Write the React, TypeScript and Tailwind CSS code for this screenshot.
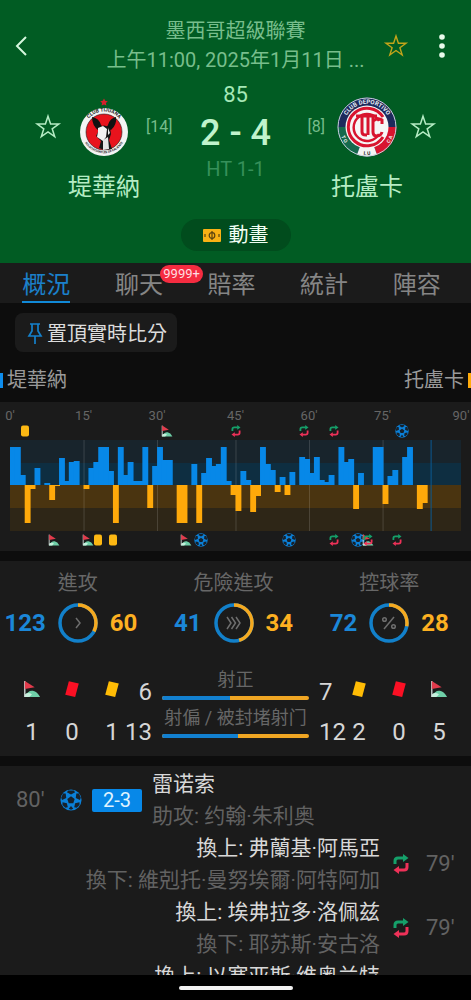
import type { ReactNode } from 'react';

// The timeline has 92 slots: 0-45 and stoppage, then 46-90 and stoppage
const SLOTS = 92;
const SLOT_W = 5;

// Pressure per slot: positive is the home side, negative is the away side
const momentum = [
  38, 38, 10, -38, -4, 17, 0, 2, -15, -1, 27, 4, 23, 24, 0, -4, 17, 23, 38, 38, 14, -38, 38, 10, 23, 4,
  4, 38, -23, 19, 38, 25, 25, 0, -38, -38, 0, 21, -38, 12, 27, 19, 21, 38, 4, -10, -26, 14, 5, -27,
  -11, 38, 21, 15, -7, 8, -10, 13, 0, 28, 26, 12, 28, 5, 3, 10, 0, 38, 23, 26, -24, 12, 0, 0, 38, 38,
  -19, 9, 15, 0, 28, 38, 0, -24, -18,
];

const ticks = [
  { slot: 0, label: "0'" },
  { slot: 15, label: "15'" },
  { slot: 30, label: "30'" },
  { slot: 46, label: "45'" },
  { slot: 61, label: "60'" },
  { slot: 76, label: "75'" },
  { slot: 92, label: "90'" },
];

type MarkerKind = 'card' | 'corner' | 'sub' | 'goal';

const homeMarkers: { slot: number; kind: MarkerKind }[] = [
  { slot: 3, kind: 'card' },
  { slot: 32, kind: 'corner' },
  { slot: 46, kind: 'sub' },
  { slot: 60, kind: 'sub' },
  { slot: 66, kind: 'sub' },
  { slot: 80, kind: 'goal' },
];

const awayMarkers: { slot: number; kind: MarkerKind }[] = [
  { slot: 9, kind: 'corner' },
  { slot: 16, kind: 'corner' },
  { slot: 18, kind: 'card' },
  { slot: 21, kind: 'card' },
  { slot: 36, kind: 'corner' },
  { slot: 39, kind: 'goal' },
  { slot: 57, kind: 'goal' },
  { slot: 66, kind: 'sub' },
  { slot: 71, kind: 'goal' },
  { slot: 73, kind: 'corner' },
  { slot: 73, kind: 'sub' },
  { slot: 79, kind: 'sub' },
];

const tabs = [
  { label: '概況', active: true },
  { label: '聊天', badge: '9999+' },
  { label: '賠率' },
  { label: '統計' },
  { label: '陣容' },
];

const substitutions = [
  { on: '弗蘭基·阿馬亞', off: '維剋托·曼努埃爾·阿特阿加', minute: "79'" },
  { on: '埃弗拉多·洛佩兹', off: '耶苏斯·安古洛', minute: "79'" },
  { on: '以塞亚斯·维奥兰特' },
];

function StarIcon({ className }: { className: string }) {
  return (
    <svg viewBox="0 0 28 28" fill="none" stroke="currentColor" strokeWidth="1.5" className={className}>
      <path d="M14 3.2l2.6 7.8h8.2l-6.6 4.8 2.5 7.9L14 18.9l-6.7 4.8 2.5-7.9L3.2 11h8.2z" />
    </svg>
  );
}

function BallIcon({ className }: { className: string }) {
  return (
    <svg viewBox="0 0 24 24" className={className}>
      <circle cx="12" cy="12" r="11.5" fill="#0b80d8" />
      <g fill="#17212b">
        <path d="M12 8l4 3-1.500 4.500h-5L8 11z" />
        <path d="M7.500 3.500L12 6l4.500-2.500L15 1.500H9z" />
        <path d="M17.800 5l-.6 4.700 4.500 2.300 1-2.500-2-4.500z" />
        <path d="M21.300 14.500l-4.800 1-1 4.500 2.800.5 3-3z" />
        <path d="M2.700 14.500l4.800 1 1 4.500-2.800.5-3-3z" />
        <path d="M6.200 5l.6 4.700L2.300 12l-1-2.500 2-4.500z" />
        <path d="M9.500 21.500L12 18.500l2.500 3L12 22.500z" />
      </g>
    </svg>
  );
}

function SubIcon({ className }: { className: string }) {
  return (
    <svg viewBox="0 0 16 20" fill="none" strokeWidth="3" className={className}>
      <path d="M2 10V7q0-3 3-3h6" stroke="#15a06a" />
      <path d="M10 0l5.500 4L10 8z" fill="#15a06a" />
      <path d="M14 9v4q0 3-3 3H5" stroke="#ee3158" />
      <path d="M6 12L.5 16 6 20z" fill="#ee3158" />
    </svg>
  );
}

function CornerIcon({ className }: { className: string }) {
  return (
    <svg viewBox="0 0 20 20" className={className}>
      <path d="M2 19v-1q4-7 9-6t8 7z" fill="#6fcfa8" />
      <path d="M2 19v-3q4-3 8 0l-3 3z" fill="#c5f0dc" />
      <path d="M2 1v18" stroke="#d9e2e0" strokeWidth="1.4" />
      <path d="M2 1l11 7-11 2z" fill="#e23b4c" />
    </svg>
  );
}

function CardIcon({ color, className }: { color: string; className: string }) {
  return (
    <svg viewBox="0 0 20 20" className={className}>
      <path d="M6.500 1.500l11 2.500-4 15-11-2.500z" fill={color} />
    </svg>
  );
}

function TijuanaLogo() {
  return (
    <svg viewBox="0 0 60 60" className="size-[60px]">
      <defs>
        <path id="tj-top" d="M10.5 36a19.600 19.600 0 1 1 39 0" />
        <path id="tj-bottom" d="M8 38a22.400 22.400 0 0 0 44 0" />
      </defs>
      <path d="M30 1.500l1.200 2.300 2.600.4-1.900 1.800.5 2.600-2.400-1.200-2.400 1.200.5-2.600-1.900-1.800 2.600-.4z" fill="#d5202c" />
      <circle cx="30" cy="35" r="24" fill="#f4f4f4" />
      <circle cx="30" cy="35" r="18" fill="#e8131d" stroke="#222" strokeWidth=".6" />
      <path d="M18 20q7 1 9 8l3 3-5 3q-7-5-7-14z" fill="#111" />
      <path d="M42 20q-6 1-8 8l-2 3 5 2q6-5 5-13z" fill="#111" />
      <path d="M24 31q6-5 12 0l1 6-2 6 3 9q-8 2-13-1l2-7-5-5 2-4z" fill="#161616" />
      <path d="M24 31l5-2 4 3-1 8-3 4-6-4 1-5z" fill="#f3f3f3" />
      <path d="M29 43l5-3 1 12-6 1z" fill="#e5e5e5" />
      <path d="M34 31l2 5-2 2z" fill="#eee" />
      <text fontSize="5" fontWeight="700" fill="#222" textAnchor="middle">
        <textPath href="#tj-top" startOffset="50%">CLUB TIJUANA</textPath>
      </text>
      <text fontSize="3" fontWeight="700" fill="#222" textAnchor="middle">
        <textPath href="#tj-bottom" startOffset="50%">XOLOITZCUINTLES DE CALIENTE</textPath>
      </text>
    </svg>
  );
}

function TolucaLogo() {
  return (
    <svg viewBox="0 0 60 60" className="size-[60px] overflow-visible">
      <defs>
        <path id="tl-top" d="M7 33a23.200 23.200 0 1 1 46 0" />
        <path id="tl-bottom" d="M3 31a27 27 0 0 0 54 0" />
      </defs>
      <circle cx="30" cy="30" r="29.5" fill="#1d2a5c" />
      <path d="M.5 30H30L20 57.700A29.500 29.500 0 0 1 .5 30z" fill="#15694d" />
      <path d="M59.500 30H30l10 27.700A29.500 29.500 0 0 0 59.500 30z" fill="#d8142f" />
      <path d="M20 57.700L30 30l10 27.700a29.500 29.500 0 0 1-20 0z" fill="#f4f4f4" />
      <circle cx="30" cy="30" r="29" fill="none" stroke="#c8d3da" strokeWidth="1" />
      <circle cx="30" cy="30" r="21.500" fill="#f6f6f6" />
      <path d="M46 20A18.800 18.800 0 1 0 46 40" fill="none" stroke="#d8142f" strokeWidth="3" />
      <path d="M42 24A13.500 13.500 0 1 0 42 37" fill="none" stroke="#d8142f" strokeWidth="2.500" />
      <path
        d="M19 19h21M25 20v15q0 3 4 3h1M31 20v18M36 20v15q0 4 4 4t5-4M36 24q5-4 9-1v4"
        fill="none"
        stroke="#d8142f"
        strokeWidth="3"
      />
      <text fontSize="6" fontWeight="700" fill="#e8ecf4" textAnchor="middle">
        <textPath href="#tl-top" startOffset="50%">CLUB DEPORTIVO</textPath>
      </text>
      <text fontSize="5" fontWeight="700" fill="#f1f1f1">
        <textPath href="#tl-bottom" startOffset="10%">T O</textPath>
      </text>
      <text fontSize="5" fontWeight="700" fill="#222" textAnchor="middle">
        <textPath href="#tl-bottom" startOffset="50%">L U</textPath>
      </text>
      <text fontSize="5" fontWeight="700" fill="#f1f1f1" textAnchor="end">
        <textPath href="#tl-bottom" startOffset="90%">C A</textPath>
      </text>
    </svg>
  );
}

function Team({ name, rank, logo, away }: { name: string; rank: string; logo: ReactNode; away?: boolean }) {
  return (
    <div className={`flex items-start gap-1.5 pt-[22px] ${away ? 'flex-row-reverse' : ''}`}>
      <button type="button" aria-label={`收藏 ${name}`} className="flex h-[60px] items-center text-[#b5ecc4]">
        <StarIcon className="size-7" />
      </button>
      <div className="flex flex-col items-center">
        {logo}
        <p className="mt-4 whitespace-nowrap text-2xl leading-7 text-[#b5ecc4]">{name}</p>
      </div>
      <span className="flex h-[60px] items-center text-base text-[#76bd8b]">{rank}</span>
    </div>
  );
}

function MarkerRow({ markers }: { markers: { slot: number; kind: MarkerKind }[] }) {
  return (
    <div className="relative h-[18px]">
      {markers.map((m) => (
        <span
          key={`${m.slot}-${m.kind}`}
          className="absolute top-1/2 -translate-x-1/2 -translate-y-1/2"
          style={{ left: `${(m.slot / SLOTS) * 100}%` }}
        >
          {m.kind === 'card' && <span className="block h-[11px] w-2 rounded-xs bg-[#fdb813]" />}
          {m.kind === 'corner' && <CornerIcon className="size-3" />}
          {m.kind === 'sub' && <SubIcon className="h-3 w-2.5" />}
          {m.kind === 'goal' && <BallIcon className="size-3.5" />}
        </span>
      ))}
    </div>
  );
}

function MomentumChart() {
  return (
    <svg viewBox="0 0 460 91" preserveAspectRatio="none" className="block h-[91px] w-full">
      <rect width="460" height="23" fill="#18242c" />
      <rect y="23" width="460" height="22" fill="#0e2e41" />
      <rect y="45" width="460" height="23" fill="#4a3410" />
      <rect y="68" width="460" height="23" fill="#2e2617" />
      {ticks.slice(1, -1).map((t) => (
        <rect key={t.slot} x={t.slot * SLOT_W} width="1" height="91" fill="#fff" opacity="0.15" />
      ))}
      <rect x={86 * SLOT_W - 1} width="1" height="91" fill="#0b5a94" />
      {momentum.map((v, i) => (
        <rect
          key={i}
          x={i * SLOT_W}
          y={v > 0 ? 45 - v : 45}
          width={SLOT_W + 1}
          height={Math.abs(v)}
          fill={v > 0 ? '#0788e8' : '#ffa90a'}
        />
      ))}
    </svg>
  );
}

function Donut({ title, home, away, children }: { title: string; home: number; away: number; children: ReactNode }) {
  const share = (away / (home + away)) * 100;
  return (
    <div className="min-w-0 flex-1">
      <p className="text-center text-xl leading-7 text-[#676767]">{title}</p>
      <div className="mt-1.5 grid grid-cols-[1fr_40px_1fr] items-center gap-3 text-2xl font-bold leading-10">
        <span className="justify-self-end text-[#1b87d8]">{home}</span>
        <svg viewBox="0 0 40 40" fill="none" className="size-10">
          <circle cx="20" cy="20" r="18" stroke="#1280ca" strokeWidth="3.5" />
          <circle
            cx="20"
            cy="20"
            r="18"
            stroke="#f5a91f"
            strokeWidth="3.5"
            pathLength="100"
            strokeDasharray={`${share} 100`}
            transform="rotate(-90 20 20)"
          />
          <g stroke="#6e6e6e" strokeWidth="1.5">
            {children}
          </g>
        </svg>
        <span className="text-[#fdb021]">{away}</span>
      </div>
    </div>
  );
}

function ShotBar({ label, home, away }: { label: string; home: number; away: number }) {
  return (
    <div>
      <p className="whitespace-nowrap text-center text-lg leading-6 text-[#676767]">{label}</p>
      <div className="mt-1 flex h-1 overflow-hidden rounded-full bg-[#f0a623]">
        <div className="bg-[#1280d0]" style={{ width: `${(home / (home + away)) * 100}%` }} />
      </div>
    </div>
  );
}

function Discipline({ corners, reds, yellows, away }: { corners: number; reds: number; yellows: number; away?: boolean }) {
  const items = [
    { icon: <CornerIcon className="size-[18px]" />, count: corners },
    { icon: <CardIcon color="#fb1024" className="size-[18px]" />, count: reds },
    { icon: <CardIcon color="#ffbc05" className="size-[18px]" />, count: yellows },
  ];
  return (
    <div className={`flex gap-5 pt-2 ${away ? 'flex-row-reverse' : ''}`}>
      {items.map((item, i) => (
        <div key={i} className="flex w-5 flex-col items-center">
          <span className="flex h-8 items-start pt-1">{item.icon}</span>
          <span className="mt-2 leading-8">{item.count}</span>
        </div>
      ))}
    </div>
  );
}

export default function App() {
  return (
    <div className="flex h-screen flex-col overflow-hidden bg-[#0d0d0d] font-[Roboto,'Noto_Sans_CJK_TC',sans-serif]">
      {/* Match header */}
      <header className="shrink-0 bg-[#015c23] pb-3 pt-[17px]">
        <div className="grid grid-cols-[1fr_auto_1fr] items-center">
          <button type="button" aria-label="返回" className="justify-self-start pl-3.5 text-[#d5f7dd]">
            <svg viewBox="0 0 16 22" fill="none" stroke="currentColor" strokeWidth="2" className="h-[22px] w-4">
              <path d="M12 2L3 11l9 9" />
            </svg>
          </button>
          <div className="text-center text-xl leading-[29px] text-[#78be8c]">
            <h1>墨西哥超級聯賽</h1>
            <p className="whitespace-nowrap">上午11:00, 2025年1月11日 ...</p>
          </div>
          <div className="flex items-center gap-5 justify-self-end pr-4">
            <button type="button" aria-label="收藏比賽" className="text-[#c3a41a]">
              <StarIcon className="size-[26px]" />
            </button>
            <button type="button" aria-label="更多" className="px-2.5 text-[#e8fbec]">
              <svg viewBox="0 0 6 24" fill="currentColor" className="h-6 w-1.5">
                <circle cx="3" cy="3" r="2.8" />
                <circle cx="3" cy="12" r="2.8" />
                <circle cx="3" cy="21" r="2.8" />
              </svg>
            </button>
          </div>
        </div>

        <div className="grid grid-cols-[1fr_auto_1fr] px-[34px]">
          <div className="justify-self-start">
            <Team name="堤華納" rank="[14]" logo={<TijuanaLogo />} />
          </div>
          <div className="pt-2 text-center">
            <p className="text-[22px] leading-6 text-[#a5e8b7]">85</p>
            <p className="mt-1.5 text-4xl font-medium leading-10 text-[#c0f3cc]">2 - 4</p>
            <p className="mt-1 text-xl leading-6 text-[#36905a]">HT 1-1</p>
          </div>
          <div className="justify-self-end">
            <Team name="托盧卡" rank="[8]" logo={<TolucaLogo />} away />
          </div>
        </div>

        <button
          type="button"
          className="mx-auto mt-[18px] flex h-8 items-center gap-2 rounded-full bg-[#014c1d] px-[22px] text-xl leading-8 text-[#f0fff3]"
        >
          <svg viewBox="0 0 18 13" className="h-[13px] w-[18px]">
            <rect width="18" height="13" rx="1" fill="#f9b115" />
            <circle cx="9" cy="6.5" r="2.8" fill="none" stroke="#5b4310" strokeWidth="1.2" />
            <path d="M9 2v9M2 5v3M16 5v3" stroke="#5b4310" strokeWidth="1.2" />
          </svg>
          動畫
        </button>
      </header>

      {/* Tabs */}
      <nav className="flex h-10 shrink-0 bg-[#1b1b1b] pr-2 text-2xl text-[#858585]">
        {tabs.map((tab) => (
          <a key={tab.label} href="#" className="flex flex-1 justify-center">
            <span
              className={`relative h-10 border-b-2 leading-[44px] ${tab.active ? 'border-[#1189d8] text-[#1b80ca]' : 'border-transparent'}`}
            >
              {tab.label}
              {tab.badge && (
                <span className="absolute -right-10 top-0.5 rounded-full bg-[#f52c40] px-[3px] text-[13px] leading-[18px] text-[#ffdfe2]">
                  {tab.badge}
                </span>
              )}
            </span>
          </a>
        ))}
      </nav>

      <main className="flex min-h-0 flex-1 flex-col">
        <button
          type="button"
          className="ml-[15px] mt-2.5 flex h-[39px] shrink-0 items-center gap-1 self-start rounded-lg bg-[#1b1b1b] pl-3 pr-2.5 pt-0.5 text-xl text-[#dcdcdc]"
        >
          <svg viewBox="0 0 16 22" fill="none" stroke="#1480cb" strokeWidth="1.7" className="h-[22px] w-4">
            <path d="M3 1h10M5 1v7l-3 5h12l-3-5V1M8 13v8" />
          </svg>
          置頂實時比分
        </button>

        <div className="mt-[13px] flex h-[37px] shrink-0 items-start justify-between text-xl leading-[30px] text-[#9a9a9a]">
          <span className="flex items-center gap-1">
            <span className="h-[15px] w-[3px] bg-[#0d8cec]" />
            堤華納
          </span>
          <span className="flex items-center gap-1">
            托盧卡
            <span className="h-[15px] w-[3px] bg-[#ffab0a]" />
          </span>
        </div>

        {/* Momentum timeline */}
        <section className="shrink-0 bg-[#1b1b1b] px-2.5 pb-0.5 pt-1">
          <div className="relative h-4 text-[13px] leading-5 text-[#666]">
            {ticks.map((t) => (
              <span
                key={t.slot}
                className="absolute -translate-x-1/2"
                style={{ left: `${(t.slot / SLOTS) * 100}%` }}
              >
                {t.label}
              </span>
            ))}
          </div>
          <MarkerRow markers={homeMarkers} />
          <MomentumChart />
          <MarkerRow markers={awayMarkers} />
        </section>

        {/* Team stats */}
        <section className="mt-2.5 shrink-0 bg-[#1b1b1b] pb-2 pt-2">
          <div className="flex pr-1">
            <Donut title="進攻" home={123} away={60}>
              <path d="M18 15l4 5-4 5" />
            </Donut>
            <Donut title="危險進攻" home={41} away={34}>
              <path d="M13 14l4 6-4 6M17.500 14l4 6-4 6M22 14l4 6-4 6" />
            </Donut>
            <Donut title="控球率" home={72} away={28}>
              <path d="M25 14L15 26" />
              <circle cx="15.5" cy="16.5" r="1.8" />
              <circle cx="24.5" cy="23.5" r="1.8" />
            </Donut>
          </div>

          <div className="mt-[25px] flex px-[22px] text-2xl text-[#d6d6d6]">
            <Discipline corners={1} reds={0} yellows={1} />
            <div className="ml-0.5 flex w-7 flex-col items-end gap-2 pt-2 leading-8">
              <span>6</span>
              <span>13</span>
            </div>
            <div className="mx-2.5 flex min-w-0 flex-1 flex-col gap-1.5">
              <ShotBar label="射正" home={6} away={7} />
              <ShotBar label="射偏 / 被封堵射门" home={13} away={12} />
            </div>
            <div className="mr-0.5 flex w-7 flex-col items-start gap-2 pt-2 leading-8">
              <span>7</span>
              <span>12</span>
            </div>
            <Discipline corners={5} reds={0} yellows={2} away />
          </div>
        </section>

        {/* Events */}
        <section className="mt-2.5 min-h-0 flex-1 overflow-hidden bg-[#1b1b1b] px-4 pt-0.5 text-[21px] leading-8">
          <div className="flex h-16 items-center text-[#626262]">
            <span className="w-11 text-[22px]">80'</span>
            <BallIcon className="size-[22px]" />
            <span className="ml-2.5 w-[50px] rounded-xs bg-[#0788e8] text-center text-xl leading-[23px] text-[#dff3ff]">
              2-3
            </span>
            <div className="ml-2.5">
              <p className="text-[#d8d8d8]">雷诺索</p>
              <p>助攻: 约翰·朱利奥</p>
            </div>
          </div>
          {substitutions.map((s) => (
            <div key={s.on} className="flex h-16 items-center justify-end text-[#626262]">
              <div className="self-start text-right">
                <p className="text-[#d8d8d8]">換上: {s.on}</p>
                {s.off && <p>換下: {s.off}</p>}
              </div>
              <SubIcon className="ml-3 h-5 w-[18px]" />
              <span className="ml-4 w-[29px] text-[22px]">{s.minute}</span>
            </div>
          ))}
        </section>
      </main>

      {/* Gesture bar */}
      <footer className="flex h-[25px] shrink-0 items-center justify-center bg-black">
        <div className="h-1 w-[114px] rounded-full bg-[#f1f1f1]" />
      </footer>
    </div>
  );
}
